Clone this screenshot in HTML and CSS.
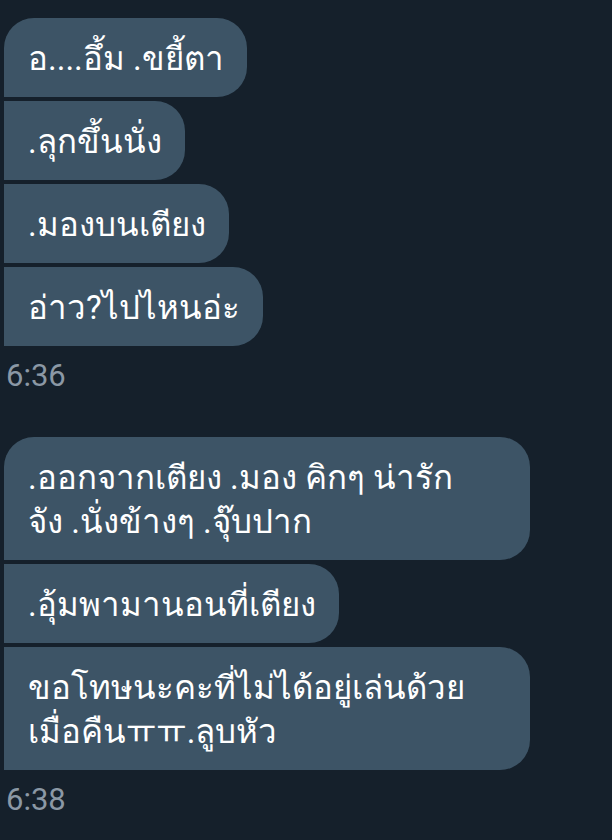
FILE: index.html
```html
<!DOCTYPE html>
<html lang="th">
<head>
    <meta charset="UTF-8">
    <title>Messages</title>
    <link rel="stylesheet" href="styles.css">
</head>
<body>

<div class="thread">
    <div class="group">
        <div class="bubble first">อ....อึ้ม .ขยี้ตา</div>
        <div class="bubble">.ลุกขึ้นนั่ง</div>
        <div class="bubble">.มองบนเตียง</div>
        <div class="bubble">อ่าว?ไปไหนอ่ะ</div>
    </div>
    <div class="time">6:36</div>

    <div class="group">
        <div class="bubble first wide">.ออกจากเตียง .มอง คิกๆ น่ารัก<br>จัง .นั่งข้างๆ .จุ๊บปาก</div>
        <div class="bubble">.อุ้มพามานอนที่เตียง</div>
        <div class="bubble wide">ขอโทษนะคะที่ไม่ได้อยู่เล่นด้วย<br>เมื่อคืนㅠㅠ.ลูบหัว</div>
    </div>
    <div class="time">6:38</div>
</div>

</body>
</html>
```

FILE: styles.css
```css
body {
    margin: 0;
    background-color: #15202b;
    font-family: Roboto, "Noto Sans", "Noto Sans CJK KR", sans-serif;
}
.thread {
    padding: 18px 4px 0 4px;
}
.group {
    display: flex;
    flex-direction: column;
    align-items: flex-start;
    gap: 4px;
}
.bubble {
    background-color: #3d5466;
    color: #ffffff;
    font-size: 33px;
    line-height: 44px;
    padding: 19px 23px 16px 24px;
    border-radius: 0 30px 30px 0;
    white-space: nowrap;
}
.bubble.first {
    border-top-left-radius: 30px;
}
.bubble.wide {
    width: 479px;
}
.time {
    color: #8b98a5;
    font-size: 31px;
    line-height: 36px;
    margin: 12px 0 43px 2px;
}
```
